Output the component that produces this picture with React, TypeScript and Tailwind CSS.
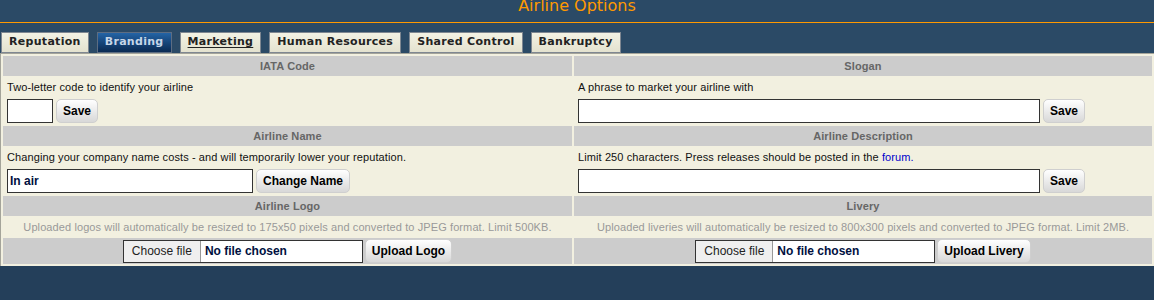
const tabs = [
  { label: "Reputation" },
  { label: "Branding", active: true },
  { label: "Marketing", underline: true },
  { label: "Human Resources" },
  { label: "Shared Control" },
  { label: "Bankruptcy" },
];

const Header = ({ children }: { children: React.ReactNode }) => (
  <div className="flex h-[20px] items-center justify-center bg-[#cccccc] text-[11px] font-bold tracking-[0.1px] text-[#666666]">
    {children}
  </div>
);

const Text = ({ children }: { children: React.ReactNode }) => (
  <div className="flex h-[18px] items-center px-[4px] text-[11px] tracking-[0.1px] text-[#111111]">
    {children}
  </div>
);

const Button = ({ children }: { children: React.ReactNode }) => (
  <button className="h-[24px] rounded-[5px] border border-[#cfcfcf] bg-linear-to-b from-white to-[#d8d8d8] px-[6px] text-[12px] font-bold leading-none text-black">
    {children}
  </button>
);

const FileInput = () => (
  <div className="flex h-[23px] w-[240px] items-stretch border border-[#333333] bg-white text-[12px]">
    <span className="flex items-center border-r border-[#999999] bg-[#efefef] px-[8px] text-[#222222]">
      Choose file
    </span>
    <span className="flex items-center pl-[4px] font-bold text-[#001040]">
      No file chosen
    </span>
  </div>
);

export default function App() {
  return (
    <div
      className="min-h-[300px] w-[1154px] bg-[#243f5a]"
      style={{ fontFamily: '"Liberation Sans", Arial, sans-serif' }}
    >
      <div className="bg-[#2b4a66]">
        <div className="h-[23px] border-b border-[#ff9900]">
          <div
            className="text-center text-[16px] leading-[12px] text-[#ff9900]"
            style={{ fontFamily: '"DejaVu Sans", Verdana, sans-serif' }}
          >
            Airline Options
          </div>
        </div>
        <div
          className="flex gap-[8px] pl-[1px] pt-[9px]"
          style={{ fontFamily: '"DejaVu Sans", Verdana, sans-serif' }}
        >
          {tabs.map((t) => (
            <div
              key={t.label}
              className={
                t.active
                  ? "flex h-[21px] items-center border border-[#5d6d82] bg-linear-to-b from-[#2464a6] to-[#0a2a52] px-[7px] text-[11px] font-bold tracking-[0.3px] text-[#c6d6e8]"
                  : "flex h-[21px] items-center border border-[#7f8791] bg-linear-to-b from-[#f3f2e4] to-[#e4e2cf] px-[7px] text-[11px] font-bold tracking-[0.3px] text-[#222222]"
              }
            >
              <span className={t.underline ? "underline underline-offset-2" : ""}>
                {t.label}
              </span>
            </div>
          ))}
        </div>
      </div>

      <div className="grid grid-cols-[569px_578px] gap-[2px] border-l border-t border-[#a4a49a] bg-[#f2f0e0] p-[2px]">
        <Header>IATA Code</Header>
        <Header>Slogan</Header>
        <Text>Two-letter code to identify your airline</Text>
        <Text>A phrase to market your airline with</Text>
        <div className="flex h-[26px] items-center gap-[3px] px-[4px]">
          <input className="h-[24px] w-[46px] border border-[#333333] bg-white" />
          <Button>Save</Button>
        </div>
        <div className="flex h-[26px] items-center gap-[3px] px-[4px]">
          <input className="h-[24px] w-[462px] border border-[#333333] bg-white" />
          <Button>Save</Button>
        </div>

        <Header>Airline Name</Header>
        <Header>Airline Description</Header>
        <Text>Changing your company name costs - and will temporarily lower your reputation.</Text>
        <Text>
          Limit 250 characters. Press releases should be posted in the&nbsp;
          <a className="text-[#0000cc]">forum.</a>
        </Text>
        <div className="flex h-[26px] items-center gap-[3px] px-[4px]">
          <input
            defaultValue="In air"
            className="h-[24px] w-[246px] border border-[#333333] bg-white px-[2px] text-[12px] font-bold text-[#001040]"
          />
          <Button>Change Name</Button>
        </div>
        <div className="flex h-[26px] items-center gap-[3px] px-[4px]">
          <input className="h-[24px] w-[462px] border border-[#333333] bg-white" />
          <Button>Save</Button>
        </div>

        <Header>Airline Logo</Header>
        <Header>Livery</Header>
        <div className="flex h-[18px] items-center justify-center text-[11px] tracking-[0.1px] text-[#999999]">
          Uploaded logos will automatically be resized to 175x50 pixels and converted to JPEG format. Limit 500KB.
        </div>
        <div className="flex h-[18px] items-center justify-center text-[11px] tracking-[0.1px] text-[#999999]">
          Uploaded liveries will automatically be resized to 800x300 pixels and converted to JPEG format. Limit 2MB.
        </div>
        <div className="flex h-[26px] items-center justify-center gap-[2px] bg-[#cccccc]">
          <FileInput />
          <Button>Upload Logo</Button>
        </div>
        <div className="flex h-[26px] items-center justify-center gap-[2px] bg-[#cccccc]">
          <FileInput />
          <Button>Upload Livery</Button>
        </div>
      </div>
    </div>
  );
}
